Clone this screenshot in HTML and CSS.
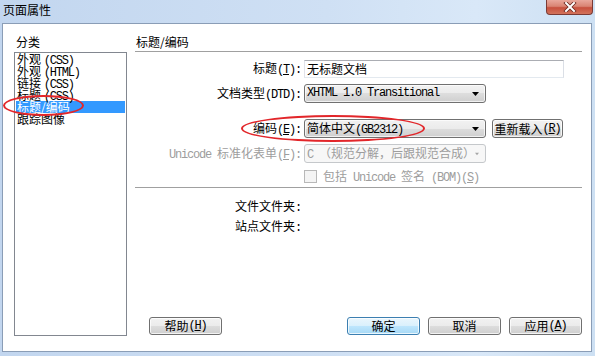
FILE: index.html
```html
<!DOCTYPE html>
<html lang="zh-CN">
<head>
<meta charset="utf-8">
<title>页面属性</title>
<link rel="stylesheet" href="styles.css">
</head>
<body>
<div class="window">
  <div class="titlebar">
    <span class="title">页面属性</span>
    <div class="close">
      <svg width="14" height="10" viewBox="0 0 14 10"><path d="M3 1 L11 9 M11 1 L3 9" stroke="#6a2a22" stroke-width="3.6" stroke-linecap="square"/><path d="M3 1 L11 9 M11 1 L3 9" stroke="#fff" stroke-width="2" stroke-linecap="square"/></svg>
    </div>
  </div>
  <div class="client">
    <div class="left">
      <div class="caption">分类</div>
      <div class="list">
        <div class="item">外观 <span class="m">(CSS)</span></div>
        <div class="item">外观 <span class="m">(HTML)</span></div>
        <div class="item">链接 <span class="m">(CSS)</span></div>
        <div class="item">标题 <span class="m">(CSS)</span></div>
        <div class="item sel">标题/编码</div>
        <div class="item">跟踪图像</div>
      </div>
    </div>
    <div class="right">
      <div class="header">标题/编码</div>
      <div class="row r1">
        <div class="lbl">标题<span class="m">(<u>T</u>):</span></div>
        <div class="input">无标题文档</div>
      </div>
      <div class="row r2">
        <div class="lbl">文档类型<span class="m">(DTD):</span></div>
        <div class="combo"><span class="val m">XHTML 1.0 Transitional</span><svg class="arrow" width="7" height="4" viewBox="0 0 7 4"><path d="M0 0h7L3.5 4z" fill="#000"/></svg></div>
      </div>
      <div class="row r3">
        <div class="lbl">编码<span class="m">(<u>E</u>):</span></div>
        <div class="combo"><span class="val">简体中文<span class="m">(GB2312)</span></span><svg class="arrow" width="7" height="4" viewBox="0 0 7 4"><path d="M0 0h7L3.5 4z" fill="#000"/></svg></div>
        <div class="btn reload">重新载入<span class="m">(<u>R</u>)</span></div>
      </div>
      <div class="row r4 disabled">
        <div class="lbl"><span class="m">Unicode </span>标准化表单<span class="m">(<u>F</u>):</span></div>
        <div class="combo off"><span class="val"><span class="m">C </span>（规范分解，后跟规范合成）</span><svg class="arrow" width="7" height="4" viewBox="0 0 7 4"><path d="M0 0h7L3.5 4z" fill="#a6a6a6"/></svg></div>
      </div>
      <div class="row r5 disabled">
        <div class="lbl"></div>
        <div class="check"></div>
        <div class="checklbl">包括<span class="m"> Unicode </span>签名<span class="m"> (BOM)(<u>S</u>)</span></div>
      </div>
      <div class="sep"></div>
      <div class="row info i1">
        <div class="lbl">文件文件夹<span class="m">:</span></div>
      </div>
      <div class="row info i2">
        <div class="lbl">站点文件夹<span class="m">:</span></div>
      </div>
      <div class="buttons">
        <div class="btn help">帮助<span class="m">(<u>H</u>)</span></div>
        <div class="btn ok">确定</div>
        <div class="btn">取消</div>
        <div class="btn">应用<span class="m">(<u>A</u>)</span></div>
      </div>
    </div>
    <div class="mark mark1"></div>
    <div class="mark mark2"></div>
  </div>
</div>
</body>
</html>
```
FILE: styles.css
```css
* { box-sizing: border-box; }

body {
  margin: 0;
  width: 595px;
  height: 356px;
  overflow: hidden;
  font-family: "Noto Sans CJK SC", sans-serif;
  font-size: 12px;
  color: #000;
  background: linear-gradient(to right, #c2d6ef 0%, #cfe0f4 55%, #d9e8f8 80%, #cde0f3 100%);
}

.m {
  font-family: "Liberation Mono", monospace;
  font-size: 12px;
  letter-spacing: -1.2px;
}

.window {
  height: 356px;
  display: flex;
  flex-direction: column;
}

.titlebar {
  flex: none;
  height: 23px;
  display: flex;
  justify-content: space-between;
  align-items: flex-start;
  padding-left: 3px;
  padding-right: 2px;
}

.title {
  line-height: 20px;
  color: #000;
}

.close {
  width: 47px;
  height: 15px;
  border: 1px solid #7b3a34;
  border-top: none;
  border-radius: 0 0 4px 4px;
  background: linear-gradient(#e9a89c 0%, #d98473 45%, #c7503d 55%, #d2735b 100%);
  display: flex;
  align-items: center;
  justify-content: center;
}

.client {
  flex: 1;
  margin: 0 3px 4px 2px;
  background: #fff;
  border: 1px solid #8a9db6;
  padding: 11px 9px 15px 11px;
  display: flex;
  gap: 8px;
  position: relative;
}

.left {
  flex: none;
  width: 113px;
  display: flex;
  flex-direction: column;
}

.caption {
  line-height: 14px;
  padding-left: 2px;
  margin-bottom: 3px;
}

.list {
  flex: 1;
  border: 1px solid #828790;
  padding-top: 0;
}

.item {
  height: 12px;
  line-height: 12px;
  margin: 0 1px;
  padding-left: 1px;
  white-space: nowrap;
}

.item.sel {
  background: #3399ff;
  color: #fff;
}

.right {
  flex: 1;
  display: flex;
  flex-direction: column;
}

.header {
  line-height: 14px;
  padding-left: 1px;
  padding-bottom: 2px;
  border-bottom: 1px solid #a0a0a0;
}

.row {
  display: flex;
  align-items: center;
  gap: 3px;
}

.lbl {
  flex: none;
  width: 166px;
  text-align: right;
  white-space: nowrap;
  line-height: 14px;
}

.r1 { margin-top: 8px; height: 18px; }
.r2 { margin-top: 6px; height: 19px; }
.r3 { margin-top: 16px; height: 19px; }
.r4 { margin-top: 6px; height: 19px; }
.r5 { margin-top: 7px; height: 13px; }

.disabled { color: #9d9d9d; }

.input {
  width: 260px;
  height: 18px;
  border: 1px solid;
  border-color: #abadb3 #dbdfe6 #e3e9ef #e2e3ea;
  background: #fff;
  padding-left: 2px;
  line-height: 16px;
}

.combo {
  width: 182px;
  height: 19px;
  border: 1px solid #707070;
  border-radius: 3px;
  background: linear-gradient(#f2f2f2 0%, #ebebeb 50%, #dddddd 50%, #cfcfcf 100%);
  box-shadow: inset 0 0 0 1px rgba(255,255,255,0.7);
  display: flex;
  align-items: center;
  justify-content: space-between;
  padding: 0 6px 0 2px;
  white-space: nowrap;
  line-height: 17px;
}

.combo.off {
  border-color: #c5c8cb;
  background: #f7f7f7;
  box-shadow: none;
  color: #9d9d9d;
}

.btn {
  width: 73px;
  height: 18px;
  border: 1px solid #707070;
  border-radius: 3px;
  background: linear-gradient(#f2f2f2 0%, #ebebeb 50%, #dddddd 50%, #cfcfcf 100%);
  box-shadow: inset 0 0 0 1px rgba(255,255,255,0.75);
  display: flex;
  align-items: center;
  justify-content: center;
  white-space: nowrap;
  line-height: 16px;
}

.btn.reload {
  width: 71px;
  height: 19px;
  margin-left: 3px;
}

.btn.ok {
  border-color: #3c7fb1;
  background: linear-gradient(#eaf6fd 0%, #d9f0fc 50%, #bee6fd 50%, #a7d9f5 100%);
}

.check {
  width: 13px;
  height: 13px;
  border: 1px solid #b8b8b8;
  background: #f4f4f4;
}

.checklbl {
  margin-left: 3px;
  line-height: 14px;
  white-space: nowrap;
}

.sep {
  margin-top: 4px;
  border-top: 1px solid #a0a0a0;
}

.info { height: 14px; }
.i1 { margin-top: 12px; }
.i2 { margin-top: 6px; }

.buttons {
  margin-top: auto;
  display: flex;
  gap: 8px;
  padding-left: 14px;
  padding-bottom: 1px;
}

.btn.help { margin-right: auto; }

.mark {
  position: absolute;
  border: 2px solid #e2262a;
  border-radius: 50%;
  pointer-events: none;
}

.mark1 {
  left: 0;
  top: 71px;
  width: 81px;
  height: 21px;
}

.mark2 {
  left: 238px;
  top: 91px;
  width: 184px;
  height: 27px;
}
```
